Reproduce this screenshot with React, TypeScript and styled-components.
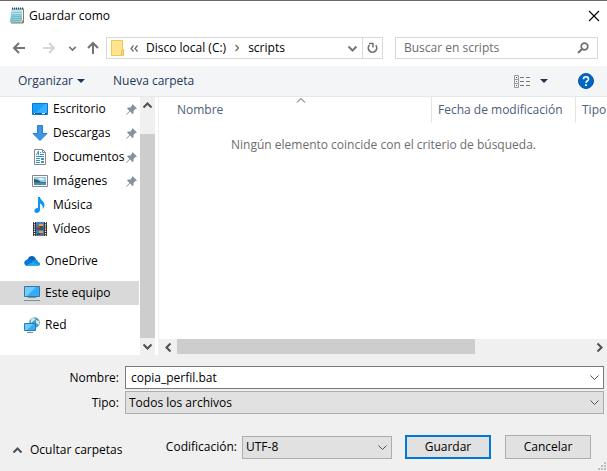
import React from "react";
import styled, { createGlobalStyle } from "styled-components";

const GlobalStyle = createGlobalStyle`
  * { box-sizing: border-box; }
  body { margin: 0; background: #fff; }
  body, button, input, select {
    font-family: "Open Sans", "Noto Sans", sans-serif;
    font-size: 12px;
    line-height: 16px;
    color: #000;
  }
  button { border: 0; padding: 0; background: none; }
  svg { display: block; flex: none; }
`;

const Dialog = styled.main`
  display: flex;
  flex-direction: column;
  min-height: 100vh;
  border-top: 1px solid #6b696b;
  background: #fff;
  overflow: hidden;
`;

const TitleBar = styled.header`
  display: flex;
  align-items: center;
  height: 29px;
  padding: 0 7px 0 9px;
`;

const Title = styled.h1`
  flex: 1;
  margin: 0 0 0 4px;
  font-size: 12px;
  font-weight: 400;
`;

const IconButton = styled.button<{ $width?: number }>`
  display: flex;
  flex: none;
  align-items: center;
  justify-content: center;
  width: ${(p) => p.$width ?? 16}px;
`;

const NavRow = styled.nav`
  display: flex;
  align-items: center;
  height: 36px;
  padding: 0 9px 0 12px;
`;

const History = styled.div`
  display: flex;
  align-items: center;
  width: 94px;
`;

const HistoryGap = styled.span<{ $width: number }>`
  width: ${(p) => p.$width}px;
`;

const Address = styled.div`
  display: flex;
  flex: 1;
  align-items: center;
  min-width: 0;
  height: 22px;
  padding-left: 4px;
  border: 1px solid #d9d9d9;
`;

const Crumbs = styled.div`
  display: flex;
  flex: 1;
  align-items: center;
  gap: 7px;
  margin-left: 6px;
  white-space: nowrap;
`;

const Refresh = styled(IconButton)`
  align-self: stretch;
  border-left: 1px solid #d9d9d9;
`;

const Search = styled.label`
  display: flex;
  align-items: center;
  width: 203px;
  height: 22px;
  margin-left: 12px;
  padding: 0 8px;
  border: 1px solid #d9d9d9;
`;

const SearchInput = styled.input`
  flex: 1;
  min-width: 0;
  padding: 0;
  border: 0;
  outline: 0;
  &::placeholder { color: #6d6d6d; opacity: 1; }
`;

const Toolbar = styled.div`
  display: flex;
  align-items: center;
  height: 31px;
  padding: 0 13px 0 18px;
  border-bottom: 1px solid #e6e7e9;
  background: #f4f5f7;
`;

const ToolButton = styled.button`
  display: flex;
  align-items: center;
  gap: 4px;
  margin-right: 28px;
  color: #1e395b;
`;

const ToolbarEnd = styled.div`
  display: flex;
  align-items: center;
  gap: 10px;
  margin-left: auto;
`;

const HelpButton = styled.button`
  margin-left: 20px;
`;

const Body = styled.div`
  display: flex;
  flex: 1;
  min-height: 0;
`;

const Sidebar = styled.aside`
  display: flex;
  width: 155px;
`;

const Tree = styled.ul`
  flex: 1;
  min-width: 0;
  margin: 0 1px 0 0;
  padding: 0;
  list-style: none;
`;

const TreeItem = styled.li<{ $nested?: boolean; $selected?: boolean }>`
  display: flex;
  align-items: center;
  height: 24px;
  margin-top: ${(p) => (p.$nested ? 0 : 8)}px;
  padding-left: ${(p) => (p.$nested ? 32 : 24)}px;
  padding-right: 2px;
  background: ${(p) => (p.$selected ? "#d9d9d9" : "transparent")};
`;

const TreeLink = styled.a`
  display: flex;
  flex: 1;
  align-items: center;
  gap: 5px;
  min-width: 0;
  color: #000;
  text-decoration: none;
  white-space: nowrap;
`;

const ScrollTrack = styled.div<{ $vertical?: boolean }>`
  display: flex;
  flex: none;
  flex-direction: ${(p) => (p.$vertical ? "column" : "row")};
  ${(p) => (p.$vertical ? "width: 15px;" : "height: 16px;")}
  ${(p) => (p.$vertical ? "" : "padding-bottom: 1px;")}
  background: #f0f0f0;
`;

const ScrollButton = styled.button<{ $width?: number }>`
  display: flex;
  flex: none;
  align-items: center;
  justify-content: center;
  width: ${(p) => p.$width ?? 15}px;
  height: 17px;
`;

const ScrollThumb = styled.div<{ $grow: number }>`
  flex: ${(p) => p.$grow};
  background: #cdcdcd;
`;

const ScrollSpace = styled.div<{ $grow: number }>`
  flex: ${(p) => p.$grow};
`;

const Content = styled.section`
  display: flex;
  flex: 1;
  flex-direction: column;
  min-width: 0;
  margin-left: 3px;
  border-left: 1px solid #f0f0f0;
`;

const FileArea = styled.div`
  flex: 1;
  padding-left: 11px;
`;

const FileTable = styled.table`
  width: 100%;
  table-layout: fixed;
  border-collapse: separate;
  border-spacing: 0;
`;

const Column = styled.th<{ $width?: number }>`
  position: relative;
  width: ${(p) => (p.$width ? `${p.$width}px` : "auto")};
  height: 26px;
  padding: 0 0 0 6px;
  border-left: 1px solid ${(p) => (p.$width ? "#e5e5e5" : "transparent")};
  color: #4c607a;
  font-weight: 400;
  text-align: left;
  white-space: nowrap;
`;

const SortMark = styled.span`
  position: absolute;
  top: -2px;
  left: 50%;
  transform: translateX(-50%);
`;

const Message = styled.td`
  padding: 14px 10px 0 0;
  color: #6d6d6d;
  text-align: center;
`;

const Footer = styled.form`
  display: flex;
  flex-direction: column;
  gap: 2px;
  position: relative;
  padding: 11px 3px 12px 0;
  background: #f0f0f0;
`;

const FieldRow = styled.div`
  display: grid;
  grid-template-columns: 119px 1fr;
  gap: 6px;
  align-items: center;
`;

const FieldLabel = styled.label`
  text-align: right;
`;

const NameBox = styled.div`
  display: flex;
  height: 23px;
  border: 1px solid #7a7a7a;
  background: #fff;
`;

const NameInput = styled.input`
  flex: 1;
  min-width: 0;
  padding: 0 5px;
  border: 0;
  outline: 0;
`;

const SelectBox = styled.div<{ $width?: number }>`
  display: grid;
  align-items: center;
  width: ${(p) => (p.$width ? `${p.$width}px` : "auto")};
  height: 23px;
  border: 1px solid #adadad;
  background: #e1e1e1;
  > * { grid-area: 1 / 1; }
  > svg { justify-self: end; margin-right: 3px; pointer-events: none; }
`;

const Select = styled.select`
  width: 100%;
  height: 21px;
  padding: 0 20px 0 3px;
  border: 0;
  outline: 0;
  appearance: none;
  background: transparent;
`;

const Actions = styled.div`
  display: flex;
  align-items: center;
  height: 24px;
  margin-top: 19px;
  padding: 0 13px 0 12px;
`;

const HideFolders = styled.button`
  display: flex;
  align-items: center;
  gap: 7px;
  margin: 6px auto 0 0;
`;

const PushButton = styled.button<{ $primary?: boolean }>`
  width: 86px;
  height: 24px;
  margin-left: ${(p) => (p.$primary ? 13 : 14)}px;
  border: ${(p) => (p.$primary ? "2px solid #0078d7" : "1px solid #adadad")};
  background: #e1e1e1;
`;

const EncodingLabel = styled.label`
  margin-right: 5px;
`;

const Grip = styled.svg`
  position: absolute;
  right: 1px;
  bottom: 1px;
`;

type Dir = "up" | "down" | "left" | "right";
const chevrons: Record<Dir, string> = {
  up: "M1.5 7.5 5.5 3.5 9.5 7.5",
  down: "M1.5 3.5 5.5 7.5 9.5 3.5",
  left: "M7.5 1.5 3.5 5.5 7.5 9.5",
  right: "M3.5 1.5 7.5 5.5 3.5 9.5",
};

const Chevron = ({ dir, color = "#505050", weight = 2, size = 11 }: { dir: Dir; color?: string; weight?: number; size?: number }) => (
  <svg width={size} height={size} viewBox="0 0 11 11" fill="none" stroke={color} strokeWidth={weight}>
    <path d={chevrons[dir]} />
  </svg>
);

const Triangle = () => (
  <svg width="8" height="4" viewBox="0 0 8 4"><path d="M0 0h8L4 4z" fill="#1b365d" /></svg>
);

const NotepadIcon = () => (
  <svg width="16" height="17" viewBox="0 0 16 17">
    <path d="M4 1.5h11v14l-1 1H2z" fill="#8b7b5c" />
    <path d="M3 1.5h10.5L12.500 15.500H.5z" fill="#8ccbd8" />
    <path d="M3.500 3h9.500L12.500 8H2.500z" fill="#b8e4ec" />
    <path d="M3 5.500h9.500M2.500 7.500h10M2.500 9.500h9.500M2 11.500h10M1.500 13.500h10.500" stroke="#67aebf" strokeWidth=".6" />
    <path d="M13.500 2v11L12 15.500" fill="none" stroke="#e8f4f5" />
    <path d="M3 1.500h11" stroke="#334b50" strokeWidth="2" strokeDasharray="1 1" />
  </svg>
);

const CloseIcon = () => (
  <svg width="12" height="12" viewBox="0 0 12 12" stroke="#000" strokeWidth="1.1"><path d="m1 1 10 10M11 1 1 11" /></svg>
);

const ArrowIcon = ({ dir, color }: { dir: "left" | "right" | "up"; color: string }) => (
  <svg width="14" height="14" viewBox="0 0 14 14" fill="none" stroke={color} strokeWidth="2">
    {dir === "left" && <path d="M13 7H2M7 2 2 7l5 5" />}
    {dir === "right" && <path d="M1 7h11M7 2l5 5-5 5" />}
    {dir === "up" && <path d="M7 13V2M2 7l5-5 5 5" />}
  </svg>
);

const FolderIcon = () => (
  <svg width="13" height="16" viewBox="0 0 13 16">
    <path d="M.5.5h11v9l1 1v5H.5z" fill="#ffe391" stroke="#f0c84c" />
    <path d="M10.500 15v-4.500l2-1v6" fill="#ffe391" stroke="#e8bd3d" />
  </svg>
);

const OverflowIcon = () => (
  <svg width="9" height="7" viewBox="0 0 9 7" fill="none" stroke="#666" strokeWidth="1.2"><path d="M3.500.5 1 3.500l2.500 3M7.500.5 5 3.500l2.500 3" /></svg>
);

const RefreshIcon = () => (
  <svg width="11" height="12" viewBox="0 0 11 12" fill="none" stroke="#707070">
    <path d="M2.500 3A4.200 4.200 0 1 0 8.800 3.300" strokeWidth="1.7" />
    <path d="M2 1.500h4v4" strokeWidth="1.5" />
  </svg>
);

const SearchIcon = () => (
  <svg width="12" height="12" viewBox="0 0 12 12" fill="none" stroke="#707070">
    <circle cx="7.500" cy="4.500" r="3.300" strokeWidth="1.700" /><path d="M5 7 1 11" strokeWidth="2" />
  </svg>
);

const ViewIcon = () => (
  <svg width="16" height="13" viewBox="0 0 16 13" fill="none">
    <path d="M.5.5h4v12h-4zM.5 4.500h4M.5 8.500h4" stroke="#9a9a9a" />
    <path d="M2 2.500h1" stroke="#555" /><path d="M2 6.500h1" stroke="#298ee8" /><path d="M2 10.500h1" stroke="#d33" />
    <path d="M6 2.500h4M12 2.500h4M6 6.500h4M12 6.500h4M6 10.500h4M12 10.500h4" stroke="#777" />
  </svg>
);

const HelpIcon = () => (
  <svg width="16" height="16" viewBox="0 0 16 16" fill="none">
    <circle cx="8" cy="8" r="7.500" fill="#0067c9" stroke="#12549a" />
    <path d="M5.500 6.200c0-3.200 5-3.200 5 0C10.500 8 8 8 8 10" stroke="#fff" strokeWidth="1.600" />
    <path d="M7 11.200h2v1.800H7z" fill="#fff" />
  </svg>
);

const PinIcon = () => (
  <svg width="11" height="11" viewBox="0 0 11 11">
    <path d="M6.500 0 11 4.500 9.500 5 7.500 7v2.500L6.500 10 4 7.500.5 11 0 10.500 3.500 7 1 4.500 2 3.500h2.500L6 1.500z" fill="#8792a0" />
  </svg>
);

const DesktopIcon = () => (
  <svg width="16" height="16" viewBox="0 0 16 16">
    <path d="M.5 2.500h15v11H.5z" fill="#16a0fb" stroke="#0879cf" />
    <path d="M4 12 13 3h2v9z" fill="#38b0ff" /><path d="M1 12.500h14" stroke="#075a9f" />
    <path d="M2 12.500h1M10 12.500h3" stroke="#fff" />
  </svg>
);

const DownloadIcon = () => (
  <svg width="16" height="16" viewBox="0 0 16 16"><path d="M5.500.5h5v8h4.500L8 15.500 1 8.500h4.500z" fill="#3b97e3" stroke="#2a7fce" /></svg>
);

const DocumentIcon = () => (
  <svg width="16" height="16" viewBox="0 0 16 16" fill="none">
    <path d="M2.500.5h8l3 3v12h-11z" fill="#fff" stroke="#888" /><path d="M10.500.5v3h3" stroke="#888" />
    <path d="M4.500 6 6.500 2v4M8 3.500h1M8 5.500h4M4 7.500h8M4 9.500h4M4 11.500h4M4 13.500h4" stroke="#2994dc" />
    <path d="M9 9h3v2H9zM9 12h3v2H9z" fill="#6189a2" />
  </svg>
);

const PictureIcon = () => (
  <svg width="16" height="16" viewBox="0 0 16 16">
    <path d="M.5 2.500h15v11H.5z" fill="#fff" stroke="#858585" />
    <path d="M2 4h12v5H2z" fill="#91c9f4" /><path d="m2 6 4 1 3 2h5v1H2z" fill="#335f52" />
    <path d="M2 9.500h12V12H2z" fill="#4990b5" /><path d="M6 5h4l3 2H8z" fill="#e8f6ff" />
  </svg>
);

const MusicIcon = () => (
  <svg width="16" height="16" viewBox="0 0 16 16">
    <path d="M6 0h2c0 3 4.500 4 4.500 8 0 1.500-1 3-2 4 .8-3-.5-4.500-2.500-5.500V13c0 3-5 4-5.500 1.500C2 12 4 10.800 6 11z" fill="#0d95f2" />
  </svg>
);

const VideoIcon = () => (
  <svg width="16" height="16" viewBox="0 0 16 16">
    <path d="M1 1h14v14H1z" fill="#303030" /><path d="M4 1h8v6.500H4zM4 8.500h8V15H4z" fill="#427fc9" />
    <path d="M2.500 1v14M13.500 1v14" stroke="#fff" strokeWidth="1.200" strokeDasharray="1.200 1" />
    <path d="M7 3h4v2H7zM7 10h4v2H7z" fill="#e8a52c" /><path d="M5 5h3v2H5zM8 12h3v2H8z" fill="#b84037" />
    <path d="M8 5h3v2H8zM5 12h3v2H5z" fill="#36583e" />
  </svg>
);

const CloudIcon = () => (
  <svg width="16" height="16" viewBox="0 0 16 16">
    <path d="M3.500 7C4.500 2 10.500 1.500 12 6.500L9 12z" fill="#0a61b8" />
    <path d="M3 13C-1 12-.5 7 3.500 6.500c2-.5 3 0 5 1.500L5 13z" fill="#0878d4" />
    <path d="M8 8.500c2-3 6-2.500 6 .5 3 .5 2.500 4 0 4H8z" fill="#1490df" />
    <path d="M2 12.500 9 9l6 3c-.5.800-1 1-2 1H3z" fill="#28a8ea" />
  </svg>
);

const ComputerIcon = () => (
  <svg width="16" height="16" viewBox="0 0 16 16">
    <path d="M.5 1.500h15v10H.5z" fill="#31adfa" stroke="#397797" />
    <path d="M1 2h11L3 11H1z" fill="#70ccff" /><path d="M4 12.500h8M0 15.500h16" stroke="#7892a8" />
  </svg>
);

const NetworkIcon = () => (
  <svg width="16" height="16" viewBox="0 0 16 16">
    <circle cx="10.500" cy="5.500" r="5.300" fill="#579cb8" />
    <path d="M7 2c2-2 5-1 4 1L8 5l-1 2zM12 3l3 1v4l-3-2z" fill="#cbe9ee" />
    <path d="M.5 6.500h11v7H.5z" fill="#31adfa" stroke="#267cab" /><path d="M1 7h8l-6 6H1z" fill="#70ccff" />
    <path d="M5.500 14h1M3 15.500h6" stroke="#7892a8" />
  </svg>
);

const places = [
  { name: "Escritorio", Icon: DesktopIcon, nested: true, pinned: true },
  { name: "Descargas", Icon: DownloadIcon, nested: true, pinned: true },
  { name: "Documentos", Icon: DocumentIcon, nested: true, pinned: true },
  { name: "Imágenes", Icon: PictureIcon, nested: true, pinned: true },
  { name: "Música", Icon: MusicIcon, nested: true },
  { name: "Vídeos", Icon: VideoIcon, nested: true },
  { name: "OneDrive", Icon: CloudIcon },
  { name: "Este equipo", Icon: ComputerIcon, selected: true },
  { name: "Red", Icon: NetworkIcon },
];

export default function App() {
  return (
    <>
      <GlobalStyle />
      <Dialog>
        <TitleBar>
          <NotepadIcon />
          <Title>Guardar como</Title>
          <IconButton $width={12} aria-label="Cerrar"><CloseIcon /></IconButton>
        </TitleBar>

        <NavRow>
          <History>
            <IconButton $width={14} aria-label="Atrás"><ArrowIcon dir="left" color="#737373" /></IconButton>
            <HistoryGap $width={16} />
            <IconButton $width={14} aria-label="Adelante"><ArrowIcon dir="right" color="#d6d6d6" /></IconButton>
            <HistoryGap $width={12} />
            <IconButton $width={9} aria-label="Recientes"><Chevron dir="down" color="#777" size={9} /></IconButton>
            <HistoryGap $width={9} />
            <IconButton $width={14} aria-label="Arriba"><ArrowIcon dir="up" color="#737373" /></IconButton>
          </History>
          <Address>
            <FolderIcon />
            <Crumbs>
              <OverflowIcon />
              <span>Disco local (C:)</span>
              <Chevron dir="right" color="#777" size={8} />
              <span>scripts</span>
            </Crumbs>
            <IconButton $width={20} aria-label="Ubicaciones anteriores"><Chevron dir="down" color="#777" weight={2} /></IconButton>
            <Refresh $width={20} aria-label="Actualizar"><RefreshIcon /></Refresh>
          </Address>
          <Search>
            <SearchInput placeholder="Buscar en scripts" aria-label="Buscar en scripts" />
            <SearchIcon />
          </Search>
        </NavRow>

        <Toolbar>
          <ToolButton>Organizar <Triangle /></ToolButton>
          <ToolButton>Nueva carpeta</ToolButton>
          <ToolbarEnd>
            <IconButton aria-label="Cambiar vista"><ViewIcon /></IconButton>
            <IconButton $width={8} aria-label="Más opciones"><Triangle /></IconButton>
            <HelpButton aria-label="Ayuda"><HelpIcon /></HelpButton>
          </ToolbarEnd>
        </Toolbar>

        <Body>
          <Sidebar>
            <Tree>
              {places.map(({ name, Icon, nested, pinned, selected }) => (
                <TreeItem key={name} $nested={nested} $selected={selected}>
                  <TreeLink href="#"><Icon />{name}</TreeLink>
                  {pinned && <PinIcon />}
                </TreeItem>
              ))}
            </Tree>
            <ScrollTrack $vertical>
              <ScrollButton aria-label="Subir"><Chevron dir="up" /></ScrollButton>
              <ScrollSpace $grow={20} />
              <ScrollThumb $grow={204} />
              <ScrollButton aria-label="Bajar"><Chevron dir="down" /></ScrollButton>
            </ScrollTrack>
          </Sidebar>
          <Content>
            <FileArea>
              <FileTable>
                <thead>
                  <tr>
                    <Column>Nombre<SortMark><Chevron dir="up" weight={1} /></SortMark></Column>
                    <Column $width={144}>Fecha de modificación</Column>
                    <Column $width={32}>Tipo</Column>
                  </tr>
                </thead>
                <tbody>
                  <tr><Message colSpan={3}>Ningún elemento coincide con el criterio de búsqueda.</Message></tr>
                </tbody>
              </FileTable>
            </FileArea>
            <ScrollTrack>
              <ScrollButton $width={18} aria-label="Izquierda"><Chevron dir="left" /></ScrollButton>
              <ScrollThumb $grow={298} />
              <ScrollSpace $grow={117} />
              <ScrollButton aria-label="Derecha"><Chevron dir="right" /></ScrollButton>
            </ScrollTrack>
          </Content>
        </Body>

        <Footer onSubmit={(e) => e.preventDefault()}>
          <FieldRow>
            <FieldLabel htmlFor="name">Nombre:</FieldLabel>
            <NameBox>
              <NameInput id="name" defaultValue="copia_perfil.bat" />
              <IconButton type="button" $width={17} aria-label="Nombres anteriores"><Chevron dir="down" weight={1} /></IconButton>
            </NameBox>
          </FieldRow>
          <FieldRow>
            <FieldLabel htmlFor="type">Tipo:</FieldLabel>
            <SelectBox>
              <Select id="type"><option>Todos los archivos</option></Select>
              <Chevron dir="down" weight={1} />
            </SelectBox>
          </FieldRow>
          <Actions>
            <HideFolders type="button"><Chevron dir="up" />Ocultar carpetas</HideFolders>
            <EncodingLabel htmlFor="encoding">Codificación:</EncodingLabel>
            <SelectBox $width={150}>
              <Select id="encoding"><option>UTF-8</option></Select>
              <Chevron dir="down" weight={1} />
            </SelectBox>
            <PushButton $primary type="submit">Guardar</PushButton>
            <PushButton type="button">Cancelar</PushButton>
          </Actions>
          <Grip width="8" height="8" viewBox="0 0 8 8" fill="#bdbdbd">
            <path d="M6 0h2v2H6zM3 3h2v2H3zM6 3h2v2H6zM0 6h2v2H0zM3 6h2v2H3zM6 6h2v2H6z" />
          </Grip>
        </Footer>
      </Dialog>
    </>
  );
}
